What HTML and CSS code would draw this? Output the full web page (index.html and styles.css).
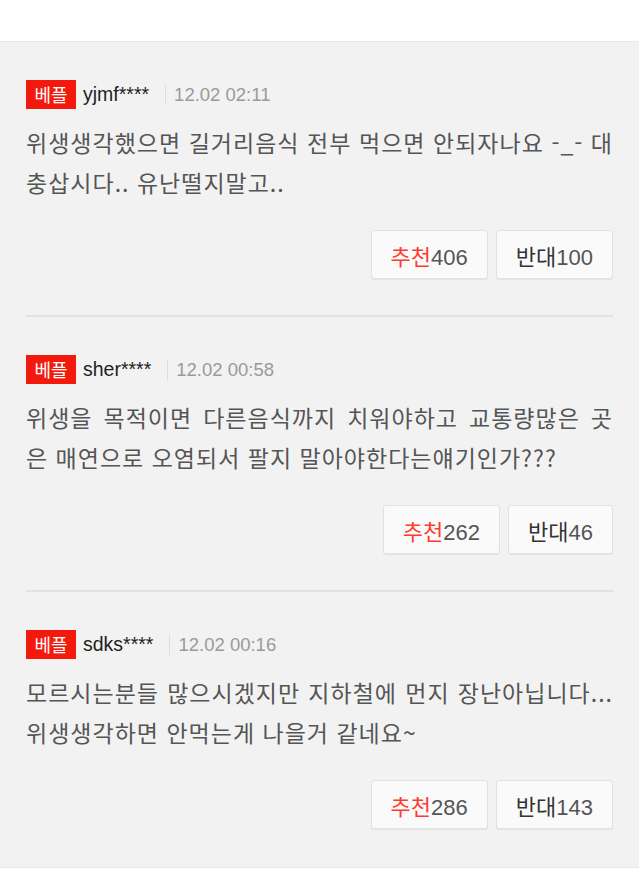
FILE: index.html
```html
<!DOCTYPE html>
<html lang="ko">
<head>
    <meta charset="UTF-8">
    <meta name="viewport" content="width=device-width, initial-scale=1.0">
    <title>베플</title>
    <link rel="stylesheet" href="styles.css">
</head>
<body>
    <div class="top"></div>

    <div class="list">
        <div class="comment">
            <div class="info">
                <span class="badge">베플</span>
                <span class="user">yjmf****</span>
                <span class="date">12.02 02:11</span>
            </div>
            <p class="text">위생생각했으면 길거리음식 전부 먹으면 안되자나요 -_- 대충삽시다.. 유난떨지말고..</p>
            <div class="votes">
                <button class="vote"><span class="up">추천</span>406</button>
                <button class="vote"><span class="down">반대</span>100</button>
            </div>
        </div>

        <div class="comment">
            <div class="info">
                <span class="badge">베플</span>
                <span class="user">sher****</span>
                <span class="date">12.02 00:58</span>
            </div>
            <p class="text">위생을 목적이면 다른음식까지 치워야하고 교통량많은 곳은 매연으로 오염되서 팔지 말아야한다는얘기인가???</p>
            <div class="votes">
                <button class="vote"><span class="up">추천</span>262</button>
                <button class="vote"><span class="down">반대</span>46</button>
            </div>
        </div>

        <div class="comment">
            <div class="info">
                <span class="badge">베플</span>
                <span class="user">sdks****</span>
                <span class="date">12.02 00:16</span>
            </div>
            <p class="text">모르시는분들 많으시겠지만 지하철에 먼지 장난아닙니다... 위생생각하면 안먹는게 나을거 같네요~</p>
            <div class="votes">
                <button class="vote"><span class="up">추천</span>286</button>
                <button class="vote"><span class="down">반대</span>143</button>
            </div>
        </div>
    </div>
</body>
</html>
```

FILE: styles.css
```css
* {
    margin: 0;
    padding: 0;
    box-sizing: border-box;
}

body {
    background-color: #fff;
    font-family: "Liberation Sans", "Noto Sans CJK KR", sans-serif;
}

.top {
    height: 42px;
    border-bottom: 1px solid #e8e8e8;
}

.list {
    background-color: #f2f2f2;
    border-bottom: 1px solid #e6e6e6;
}

.comment {
    margin: 0 26px;
    padding: 38px 0 36px;
    border-bottom: 2px solid #e2e2e2;
}

.comment:last-child {
    border-bottom: none;
    padding-bottom: 38px;
}

.info {
    display: flex;
    align-items: center;
    height: 29px;
}

.badge {
    width: 50px;
    height: 29px;
    line-height: 29px;
    background-color: #f3190c;
    color: #fff;
    font-family: "Noto Sans CJK KR", sans-serif;
    font-size: 18px;
    text-align: center;
}

.user {
    margin-left: 7px;
    font-size: 19.5px;
    color: #222;
}

.date {
    margin-left: 16px;
    padding-left: 8px;
    border-left: 1px solid #ddd;
    font-size: 18.5px;
    line-height: 20px;
    color: #9a9a9a;
}

.text {
    margin-top: 13px;
    font-family: "Noto Sans CJK KR", sans-serif;
    font-size: 23px;
    letter-spacing: 1px;
    line-height: 40px;
    color: #555;
    text-align: justify;
}

.votes {
    display: flex;
    justify-content: flex-end;
    gap: 8px;
    margin-top: 28px;
}

.vote {
    height: 49px;
    padding: 0 19px;
    background-color: #fafafa;
    border: 1px solid #e2e2e2;
    border-radius: 3px;
    box-shadow: 0 1px 1px rgba(0, 0, 0, 0.06);
    font-family: "Liberation Sans", "Noto Sans CJK KR", sans-serif;
    font-size: 22px;
    color: #555;
}

.vote span {
    font-family: "Noto Sans CJK KR", sans-serif;
}

.up {
    color: #ff3a2f;
}

.down {
    color: #333;
}
```
